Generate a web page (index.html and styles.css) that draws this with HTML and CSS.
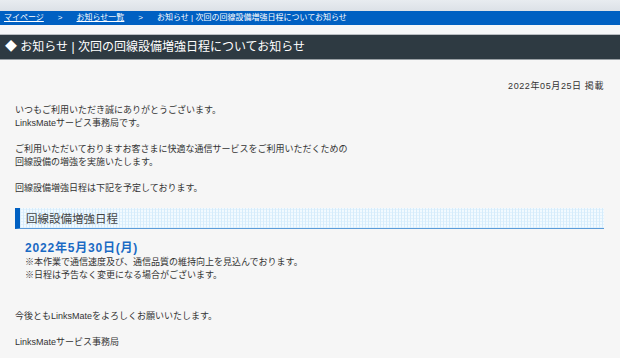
FILE: index.html
```html
<!DOCTYPE html>
<html lang="ja">

<head>
    <meta charset="UTF-8">
    <meta name="viewport" content="width=device-width, initial-scale=1.0">
    <title>お知らせ | 次回の回線設備増強日程についてお知らせ</title>
    <link rel="stylesheet" href="styles.css">
</head>

<body>

    <div class="topbar"></div>

    <nav class="breadcrumb">
        <a href="#">マイページ</a>
        <span class="sep">&gt;</span>
        <a href="#">お知らせ一覧</a>
        <span class="sep">&gt;</span>
        <span>お知らせ | 次回の回線設備増強日程についてお知らせ</span>
    </nav>

    <div class="spacer"></div>

    <h1 class="page-title">◆ お知らせ | 次回の回線設備増強日程についてお知らせ</h1>

    <main class="content">
        <p class="posted">2022年05月25日 掲載</p>

        <p>いつもご利用いただき誠にありがとうございます。<br>LinksMateサービス事務局です。</p>

        <p>ご利用いただいておりますお客さまに快適な通信サービスをご利用いただくための<br>回線設備の増強を実施いたします。</p>

        <p>回線設備増強日程は下記を予定しております。</p>

        <h2 class="section-title">回線設備増強日程</h2>

        <div class="schedule">
            <p class="schedule-date">2022年5月30日(月)</p>
            <p>※本作業で通信速度及び、通信品質の維持向上を見込んでおります。<br>※日程は予告なく変更になる場合がございます。</p>
        </div>

        <p class="closing">今後ともLinksMateをよろしくお願いいたします。</p>

        <p>LinksMateサービス事務局</p>
    </main>

</body>

</html>
```

FILE: styles.css
```css
body {
    font-family: "Liberation Sans", "Noto Sans CJK JP", sans-serif;
    margin: 0;
    background-color: #f6f6f6;
    color: #333;
}

.topbar {
    height: 11px;
    background: linear-gradient(#e8ecf0, #dce1e7);
}

.breadcrumb {
    height: 14px;
    background-color: #0060c2;
    display: flex;
    align-items: center;
    padding-left: 4px;
    font-size: 8px;
    line-height: 14px;
    color: #fff;
}

.breadcrumb a {
    color: #fff;
}

.breadcrumb .sep {
    margin: 0 14px 0 14px;
}

.spacer {
    height: 9px;
    background-color: #f5f6f8;
    border-bottom: 1px solid #b9bdc2;
}

.page-title {
    margin: 0;
    height: 24px;
    line-height: 25px;
    padding-left: 5px;
    background-color: #2e3a42;
    border-bottom: 1px solid #9aa0a5;
    color: #fff;
    font-size: 12px;
    font-weight: normal;
}

.content {
    padding: 20px 16px 0 15px;
    font-size: 9px;
    line-height: 13px;
}

.content p {
    margin: 0 0 13px;
}

.content .posted {
    text-align: right;
    letter-spacing: 0.6px;
    margin-bottom: 11px;
}

.section-title {
    margin: 7px 0 0;
    height: 20px;
    line-height: 22px;
    overflow: hidden;
    padding-left: 6px;
    border-left: 5px solid #0060c2;
    border-bottom: 1px solid #5b9bd9;
    background-color: #f2faff;
    background-image:
        repeating-linear-gradient(90deg, #d6ecfb 0 1px, transparent 1px 3px),
        repeating-linear-gradient(0deg, #e2f2fd 0 1px, transparent 1px 3px);
    font-size: 11.5px;
    font-weight: normal;
    color: #444;
}

.schedule {
    padding: 12px 0 0 10px;
}

.schedule p {
    margin: 0;
}

.schedule .schedule-date {
    font-size: 12px;
    line-height: 15px;
    font-weight: bold;
    letter-spacing: 0.8px;
    color: #1a6ac4;
}

.content .closing {
    margin-top: 28px;
}
```
